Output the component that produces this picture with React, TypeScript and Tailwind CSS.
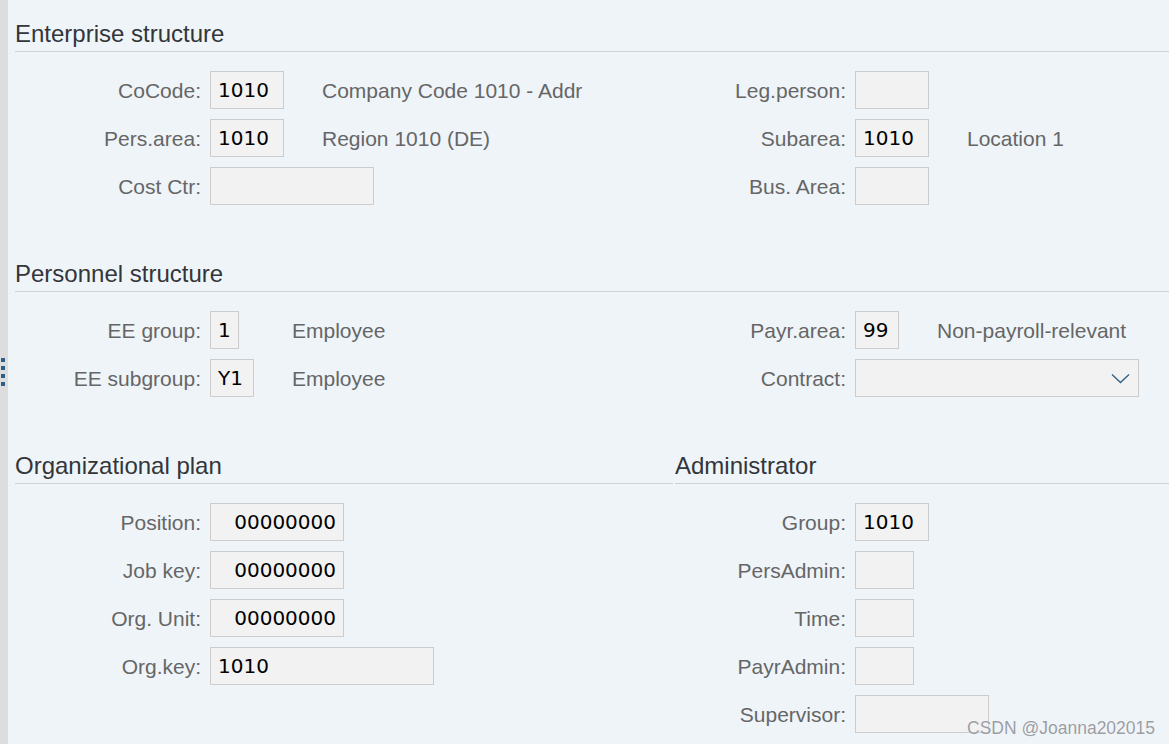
import React from "react";

type Field = {
  label: string;
  value?: string;
  width: number;
  align?: "left" | "right";
  desc?: string;
  descGap?: number;
  dropdown?: boolean;
};

const enterpriseLeft: Field[] = [
  { label: "CoCode:", value: "1010", width: 74, desc: "Company Code 1010 - Addr", descGap: 38 },
  { label: "Pers.area:", value: "1010", width: 74, desc: "Region 1010 (DE)", descGap: 38 },
  { label: "Cost Ctr:", width: 164 },
];

const enterpriseRight: Field[] = [
  { label: "Leg.person:", width: 74 },
  { label: "Subarea:", value: "1010", width: 74, desc: "Location 1", descGap: 38 },
  { label: "Bus. Area:", width: 74 },
];

const personnelLeft: Field[] = [
  { label: "EE group:", value: "1", width: 29, desc: "Employee", descGap: 53 },
  { label: "EE subgroup:", value: "Y1", width: 44, desc: "Employee", descGap: 38 },
];

const personnelRight: Field[] = [
  { label: "Payr.area:", value: "99", width: 44, desc: "Non-payroll-relevant", descGap: 38 },
  { label: "Contract:", width: 284, dropdown: true },
];

const orgPlan: Field[] = [
  { label: "Position:", value: "00000000", width: 134, align: "right" },
  { label: "Job key:", value: "00000000", width: 134, align: "right" },
  { label: "Org. Unit:", value: "00000000", width: 134, align: "right" },
  { label: "Org.key:", value: "1010", width: 224 },
];

const admin: Field[] = [
  { label: "Group:", value: "1010", width: 74 },
  { label: "PersAdmin:", width: 59 },
  { label: "Time:", width: 59 },
  { label: "PayrAdmin:", width: 59 },
  { label: "Supervisor:", width: 134 },
];

function Heading({ children }: { children: React.ReactNode }) {
  return (
    <div className="border-b border-[#cfd2d4] pt-[2px] pb-[2px] text-[24px] leading-[30px] text-[#32363a]">
      {children}
    </div>
  );
}

function Row({ field, labelWidth }: { field: Field; labelWidth: number }) {
  return (
    <div className="flex h-[38px] items-center">
      <div
        className="shrink-0 pr-[9px] pt-[2px] text-right text-[21px] leading-[24px] text-[#666666]"
        style={{ width: labelWidth + 9 }}
      >
        {field.label}
      </div>
      <div
        className={`flex h-[38px] shrink-0 items-center border border-[#cccccc] bg-[#f2f2f2] pl-[7px] pr-[7px] font-['DejaVu_Sans',sans-serif] text-[20px] leading-[24px] text-black ${
          field.align === "right" ? "justify-end" : "justify-start"
        }`}
        style={{ width: field.width }}
      >
        {field.value}
        {field.dropdown && (
          <svg className="ml-auto mr-[1px]" width="19" height="11" viewBox="0 0 19 11" fill="none">
            <path d="M1 1.5 L9.5 9.5 L18 1.5" stroke="#346187" strokeWidth="1.4" />
          </svg>
        )}
      </div>
      {field.desc && (
        <div
          className="whitespace-nowrap pt-[2px] text-[21px] leading-[24px] text-[#666666]"
          style={{ marginLeft: field.descGap }}
        >
          {field.desc}
        </div>
      )}
    </div>
  );
}

function Rows({ fields, labelWidth }: { fields: Field[]; labelWidth: number }) {
  return (
    <div className="flex flex-col gap-[10px]">
      {fields.map((f) => (
        <Row key={f.label} field={f} labelWidth={labelWidth} />
      ))}
    </div>
  );
}

function TwoColSection({
  title,
  left,
  right,
}: {
  title: string;
  left: Field[];
  right: Field[];
}) {
  return (
    <section>
      <Heading>{title}</Heading>
      <div className="mt-[19px] flex">
        <div className="w-[660px] shrink-0">
          <Rows fields={left} labelWidth={186} />
        </div>
        <div className="flex-1">
          <Rows fields={right} labelWidth={171} />
        </div>
      </div>
    </section>
  );
}

export default function App() {
  return (
    <div className="relative flex h-[744px] w-full overflow-hidden bg-[#eff4f9] font-['Liberation_Sans',Arial,sans-serif]">
      {/* splitter strip */}
      <div className="flex w-[8px] shrink-0 flex-col gap-[4px] bg-[#dddddd] pl-[1px] pt-[358px]">
        <span className="block h-[4px] w-[4px] bg-[#2e5f8c]" />
        <span className="block h-[4px] w-[4px] bg-[#2e5f8c]" />
        <span className="block h-[4px] w-[4px] bg-[#2e5f8c]" />
        <span className="block h-[4px] w-[4px] bg-[#2e5f8c]" />
      </div>

      <main className="flex flex-1 flex-col gap-[52px] pl-[7px] pt-[17px]">
        <TwoColSection title="Enterprise structure" left={enterpriseLeft} right={enterpriseRight} />
        <TwoColSection title="Personnel structure" left={personnelLeft} right={personnelRight} />

        <section className="flex">
          <div className="w-[658px] shrink-0">
            <Heading>Organizational plan</Heading>
            <div className="mt-[19px]">
              <Rows fields={orgPlan} labelWidth={186} />
            </div>
          </div>
          <div className="ml-[2px] flex-1">
            <Heading>Administrator</Heading>
            <div className="mt-[19px]">
              <Rows fields={admin} labelWidth={171} />
            </div>
          </div>
        </section>
      </main>

      <div className="absolute left-[967px] top-[717px] text-[17.5px] leading-[22px] text-[#9a9ea3] [text-shadow:0_0_1px_#ffffff]">
        CSDN @Joanna202015
      </div>
    </div>
  );
}
